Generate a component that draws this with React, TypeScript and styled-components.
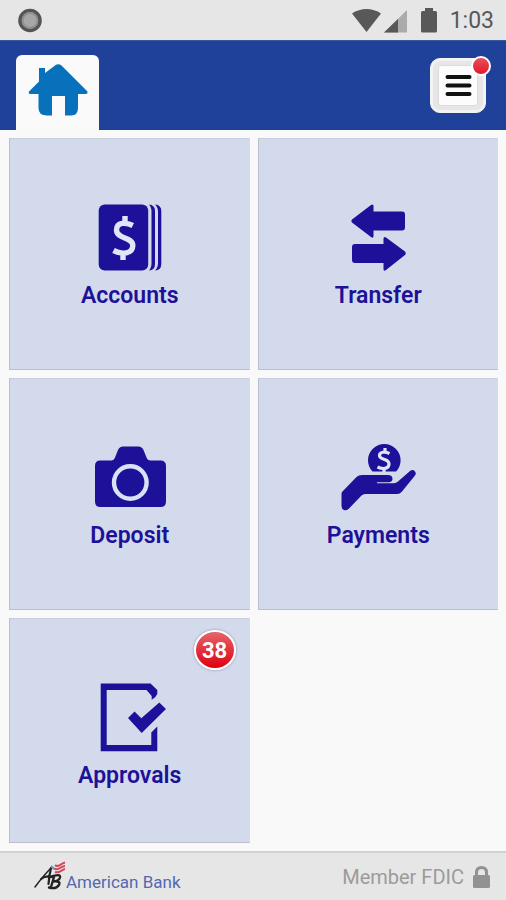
import React from "react";
import styled, { createGlobalStyle } from "styled-components";

const NAVY = "#1d1199";

const GlobalStyle = createGlobalStyle`
  * { box-sizing: border-box; }
  body {
    margin: 0;
    background: #f9f9f9;
    font-family: Roboto, "Liberation Sans", sans-serif;
  }
`;

const Screen = styled.div`
  display: flex;
  flex-direction: column;
  min-height: 100vh;
`;

const StatusBar = styled.div`
  display: flex;
  align-items: center;
  justify-content: space-between;
  height: 40px;
  padding: 0 12px 0 18px;
  background: #e6e6e6;
  color: #585858;
`;

const StatusGroup = styled.div`
  display: flex;
  align-items: center;
`;

const Clock = styled.time`
  margin-left: 11px;
  padding-top: 2px;
  font-size: 23px;
  line-height: 40px;
`;

const Header = styled.header`
  display: flex;
  align-items: flex-end;
  justify-content: space-between;
  height: 90px;
  padding: 0 20px 0 16px;
  background: #1f4199;
  border-top: 1px solid #3b579f;
`;

const HomeTab = styled.a`
  display: flex;
  justify-content: center;
  width: 83px;
  height: 75px;
  padding: 9px 0 0 1px;
  background: #fafafa;
  border-radius: 6px 6px 0 0;
`;

const MenuButton = styled.button`
  position: relative;
  display: flex;
  align-items: center;
  justify-content: center;
  width: 56px;
  height: 55px;
  margin-bottom: 17px;
  padding: 0;
  border: 1px solid #f4f4f4;
  border-radius: 10px;
  background: #e6e6e6;
  box-shadow: inset 0 0 0 2px #f3f3f3;
`;

const MenuFace = styled.span`
  display: flex;
  align-items: center;
  justify-content: center;
  width: 40px;
  height: 41px;
  border: 1px solid #dcdcdc;
  border-radius: 3px;
  background: #fcfcfc;
`;

const MenuDot = styled.span`
  position: absolute;
  top: -3px;
  right: -6px;
  width: 20px;
  height: 20px;
  border: 2px solid #fff;
  border-radius: 50%;
  background: linear-gradient(#e8505a, #e3192a);
`;

const Grid = styled.main`
  flex: 1;
  display: grid;
  grid-template-columns: 1fr 1fr;
  grid-template-rows: 232px 232px minmax(200px, 1fr);
  gap: 8px;
  padding: 8px 8px 8px 9px;
`;

const Tile = styled.button`
  position: relative;
  display: flex;
  flex-direction: column;
  align-items: center;
  justify-content: flex-start;
  padding: 65px 0 0 1px;
  border: 1px solid #b9bfcc;
  border-top-color: #c8cedc;
  border-right-color: #d2daeb;
  background: #d2daeb;
  color: ${NAVY};
  font-family: inherit;
`;

const TileLabel = styled.span`
  margin-top: 10px;
  font-size: 23px;
  font-weight: 600;
  line-height: 28px;
`;

const CountBadge = styled.span`
  position: absolute;
  top: 11px;
  right: 13px;
  width: 42px;
  height: 40px;
  border: 2px solid #fff;
  border-radius: 50%;
  background: linear-gradient(#e5656b, #e00010);
  box-shadow: 0 0 3px #8f95a8;
  color: #fff;
  font-size: 22px;
  font-weight: 700;
  line-height: 37px;
  text-align: center;
`;

const Footer = styled.footer`
  display: flex;
  align-items: center;
  justify-content: space-between;
  height: 49px;
  padding: 0 15px 0 34px;
  border-top: 2px solid #d2d2d2;
  background: #e6e6e6;
`;

const Brand = styled.div`
  display: flex;
  align-items: center;
  padding-top: 10px;
  color: #5468b0;
  font-size: 17px;
  line-height: 24px;

  svg { margin-top: -12px; }
`;

const Member = styled.div`
  display: flex;
  align-items: center;
  gap: 8px;
  color: #9b9b9b;
  font-size: 20px;
  line-height: 24px;
`;

const RecordIcon = () => (
  <svg width="25" height="25" viewBox="0 0 25 25" aria-hidden="true">
    <circle cx="12" cy="12.5" r="10" fill="#a7a7a7" stroke="#555" strokeWidth="3.6" />
    <circle cx="12" cy="12.5" r="7.5" fill="none" stroke="#909090" strokeWidth="2" />
  </svg>
);

const SignalIcons = () => (
  <svg width="87" height="26" viewBox="0 0 87 26" fill="#585858" aria-hidden="true">
    <path d="M0 6.5C8.5.5 20.5.5 29 6.5L14.5 25Z" />
    <path d="M32 25.5 55 3V25.5Z" fill="#ababab" />
    <path d="M32 25.5 46 12V25.5Z" />
    <path d="M73 1h8v3h2.5q1.500 0 1.500 1.500V24q0 1.500-1.500 1.500h-13Q69 25.500 69 24V5.500Q69 4 70.500 4H73Z" />
  </svg>
);

const HouseIcon = () => (
  <svg width="61" height="53" viewBox="0 0 61 53" aria-hidden="true">
    <path
      fill="#0871bb"
      d="M11 4H17V9L27 1.5Q30.3-1 33.5 1.5L59 27Q60.500 29.500 58 30H50V44Q50 51.500 43 51.500H37V32H24V51.500H19Q10.500 51.500 10.500 44V30H2Q-.5 29.500 1.500 27L11 17.500Z"
    />
  </svg>
);

const BarsIcon = () => (
  <svg width="27" height="23" viewBox="0 0 27 23" aria-hidden="true">
    <path d="M2.500 3H24.500M2.500 11.500H24.500M2.500 20H24.500" stroke="#111" strokeWidth="4" strokeLinecap="round" />
  </svg>
);

const TileSvg = ({ children }: { children: React.ReactNode }) => (
  <svg width="80" height="68" viewBox="0 0 80 68" fill={NAVY} overflow="visible" aria-hidden="true">
    {children}
  </svg>
);

const AccountsIcon = () => (
  <TileSvg>
    <rect x="8.7" y="0.5" width="49.5" height="66" rx="6" />
    <path d="M59 0.500Q65 1 65 7V60Q65 66 59 66.500Q61.500 64 61.500 59V8Q61.500 3 59 0.500Z" />
    <path d="M65 0.500Q71.300 1 71.300 7V60Q71.300 66 65 66.500Q68 64 68 59V8Q68 3 65 0.500Z" />
    <path
      d="M42.800 21.500C36 18 26.500 18 26.500 26C26.500 35.500 42.800 32.500 42.800 41.500C42.800 50.500 31 50.500 23.500 46.500M35 12V20M33 48V56"
      fill="none"
      stroke="#e0e6f7"
      strokeWidth="5.400"
    />
  </TileSvg>
);

const TransferIcon = () => (
  <TileSvg>
    <path d="M14 15.500 33 1Q35.500-.5 35.500 2V7.500H64Q67 7.500 67 10.500V23.500Q67 26.500 64 26.500H35.500V32Q35.500 35 33 33L14 18.500Q12.500 17 14 15.500Z" />
    <path d="M67 47.500 48 33.500Q45.500 32 45.500 35V40H17Q14 40 14 43V56Q14 59 17 59H45.500V65Q45.500 68 48 66L67 51Q68.500 49.500 67 47.500Z" />
  </TileSvg>
);

const CameraIcon = () => (
  <TileSvg>
    <path d="M10 16.500H21Q24 16.500 25 13.500L28 6Q29.500 2.500 33 2.500H48.500Q52 2.500 53.500 6L56.500 13.500Q57.500 16.500 60.500 16.500H70.500Q76 16.500 76 22V57.500Q76 63 70.500 63H10.500Q5 63 5 57.500V22Q5 16.500 10 16.500Z" />
    <circle cx="40.300" cy="38.500" r="16.300" fill="none" stroke="#d9e1f5" strokeWidth="4.400" />
  </TileSvg>
);

const PaymentsIcon = () => (
  <TileSvg>
    <path d="M34.500 27.500A16.300 16.300 0 1 1 58.100 27.500Z" />
    <path
      d="M51.500 9.500C46.500 7 41.500 8 41.500 11.500C41.500 16.500 51 14 51 20C51 25 44.500 25.500 39.500 23M47 4V8M46 24.500V28"
      fill="none"
      stroke="#dce4f5"
      strokeWidth="3.200"
    />
    <path d="M4 48 18.500 33Q20.500 31 24 31H50Q54.500 31 54.500 35Q54.500 38 50.500 38.300H39V39.300H56Q58 39 60 37.500L72 27Q75 25 77 27.500Q78.500 29.500 77 31.500L64 47.500Q62 50 59 50H27Q25 50 23.500 51.500L11 64.500Q9 67 6 66Q3.500 65 3.500 62V50Q3.500 49 4 48Z" />
  </TileSvg>
);

const ApprovalsIcon = () => (
  <TileSvg>
    <path d="M10.700-.5H60.500L67.300 6V10Q66 13.500 61.700 15.700V12L56.500 6H16.700V61H61.300V48.500L67.300 42.500V67.300H10.700Z" />
    <path d="M38 34 44.500 27.500 51.300 34.300 69.300 18.500 76 25 51.700 49Z" />
  </TileSvg>
);

const BrandMark = () => (
  <svg width="32" height="30" viewBox="0 0 32 30" fill="none" aria-hidden="true">
    <path d="M1 26Q10 14 17 7" stroke="#222" strokeWidth="1.500" strokeLinecap="round" />
    <path d="M17 7Q15 15 14.500 23M7 18Q12 14 18 16" stroke="#222" strokeWidth="2.200" strokeLinecap="round" />
    <path d="M16 16Q27 12 26 16.500Q25 20 19 20.500Q27 19.500 25 24Q22 28.500 15 26.500M20 16 17 26" stroke="#222" strokeWidth="2.400" strokeLinecap="round" />
    <path d="M21 4Q23 6 26 4T31 1.500M20 7.500Q23 9 26 7T31 5M21 11Q24 12 27 10T31 8" stroke="#d64658" strokeWidth="2" />
    <path d="M17 5 20 8" stroke="#6c8fc4" strokeWidth="2" />
  </svg>
);

const LockIcon = () => (
  <svg width="19" height="24" viewBox="0 0 19 24" aria-hidden="true">
    <path d="M4.500 11V7.500Q4.500 2.500 9.500 2.500T14.500 7.500V11" fill="none" stroke="#929292" strokeWidth="3" />
    <rect x="1" y="10" width="17" height="13" rx="1.500" fill="#929292" />
  </svg>
);

const tiles: { label: string; Icon: React.ComponentType; count?: number }[] = [
  { label: "Accounts", Icon: AccountsIcon },
  { label: "Transfer", Icon: TransferIcon },
  { label: "Deposit", Icon: CameraIcon },
  { label: "Payments", Icon: PaymentsIcon },
  { label: "Approvals", Icon: ApprovalsIcon, count: 38 },
];

export default function App() {
  return (
    <Screen>
      <GlobalStyle />
      <StatusBar>
        <RecordIcon />
        <StatusGroup>
          <SignalIcons />
          <Clock>1:03</Clock>
        </StatusGroup>
      </StatusBar>
      <Header>
        <HomeTab href="#" aria-label="Home">
          <HouseIcon />
        </HomeTab>
        <MenuButton type="button" aria-label="Menu">
          <MenuFace>
            <BarsIcon />
          </MenuFace>
          <MenuDot />
        </MenuButton>
      </Header>
      <Grid>
        {tiles.map(({ label, Icon, count }) => (
          <Tile type="button" key={label}>
            <Icon />
            <TileLabel>{label}</TileLabel>
            {count !== undefined && <CountBadge>{count}</CountBadge>}
          </Tile>
        ))}
      </Grid>
      <Footer>
        <Brand>
          <BrandMark />
          American Bank
        </Brand>
        <Member>
          Member FDIC
          <LockIcon />
        </Member>
      </Footer>
    </Screen>
  );
}
